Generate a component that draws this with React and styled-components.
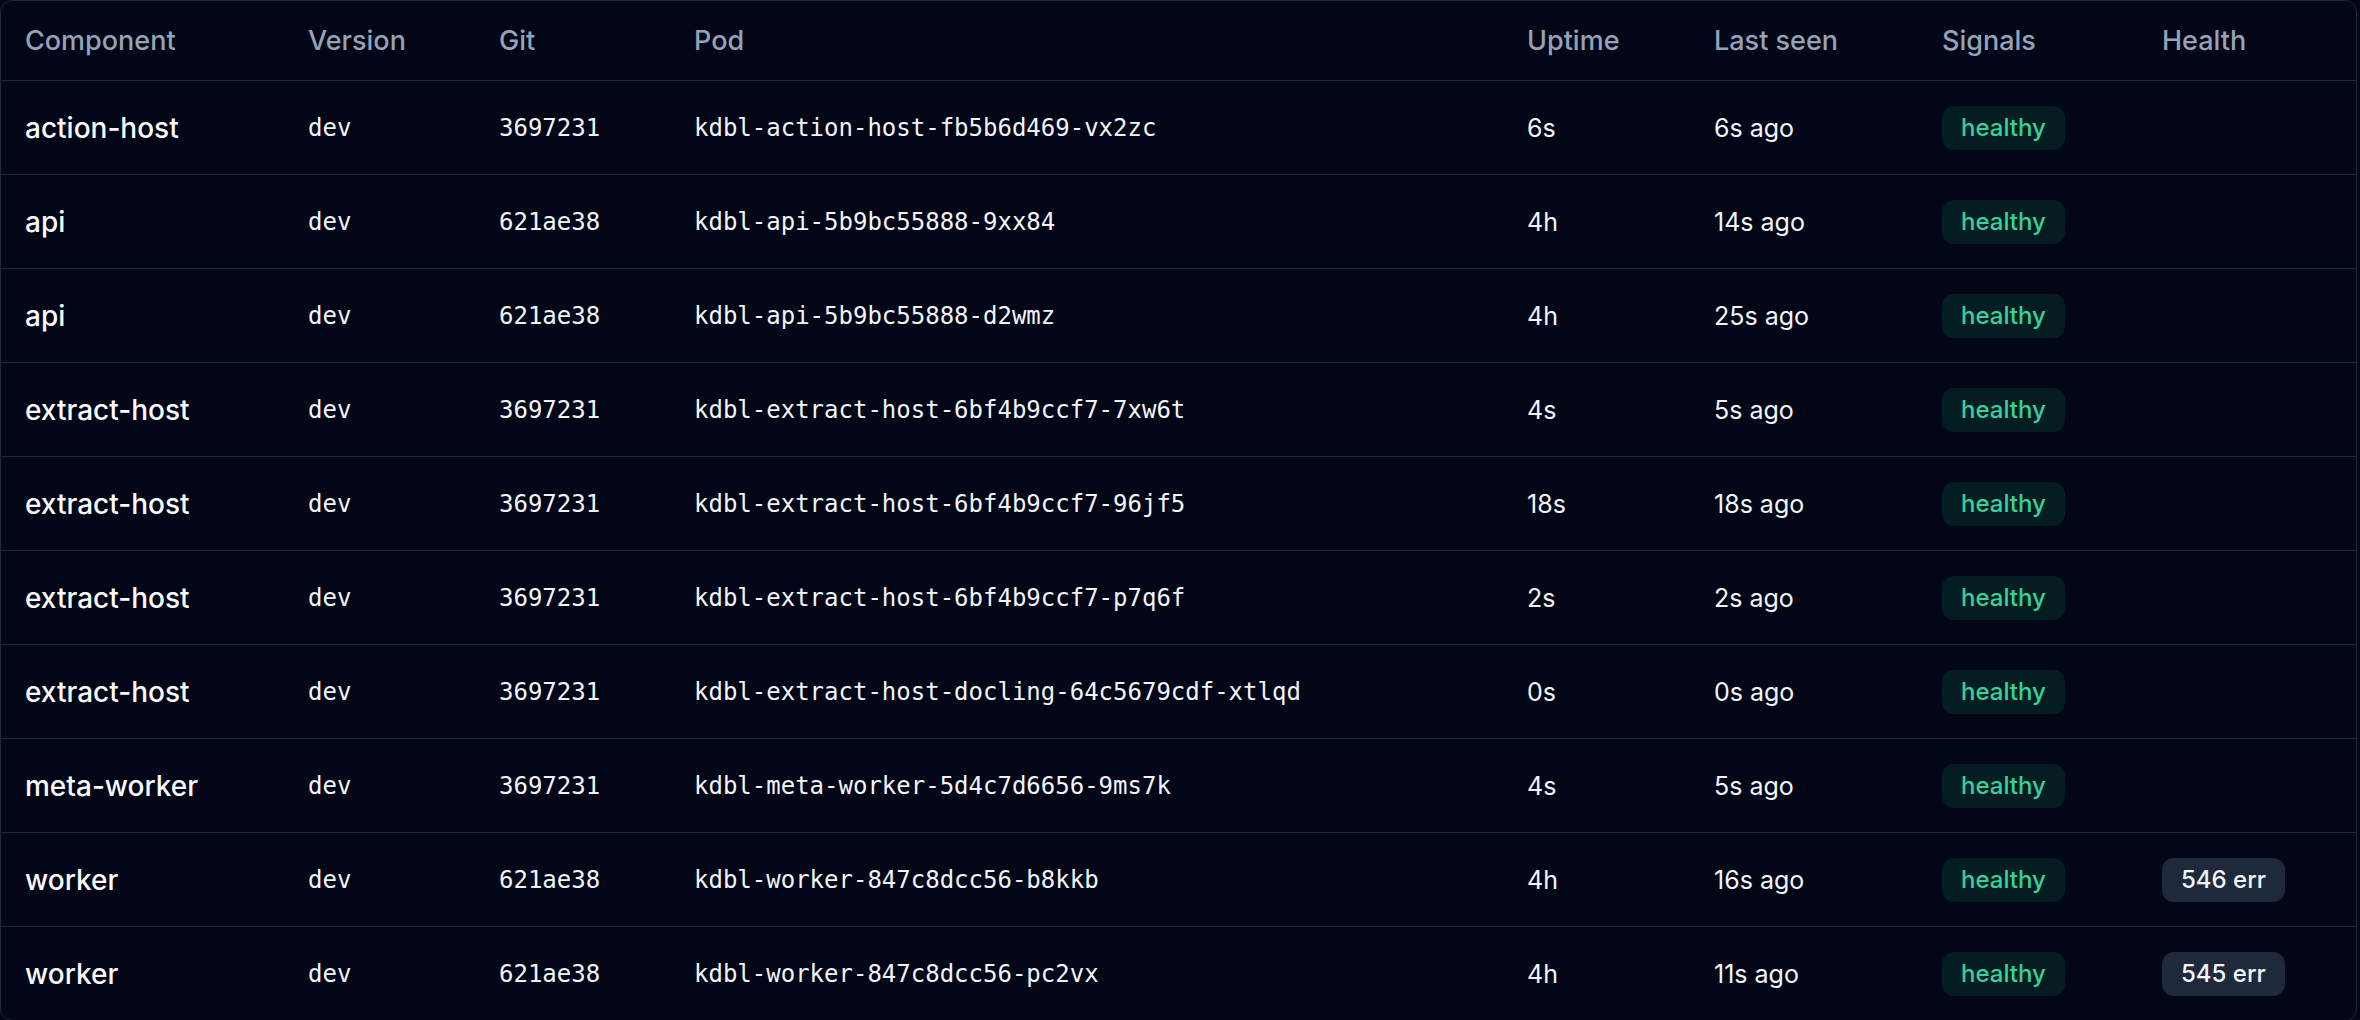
import React from 'react';
import styled, { createGlobalStyle } from 'styled-components';

const GlobalStyle = createGlobalStyle`
  html, body {
    margin: 0;
    padding: 0;
    background: #020617;
  }
  body {
    font-family: Inter, "Noto Sans", sans-serif;
    -webkit-font-smoothing: antialiased;
  }
`;

const columns = '283px 191px 195px 833px 187px 228px 220px 220px';

const Card = styled.div`
  width: 2357px;
  box-sizing: border-box;
  border: 1px solid #1e293b;
  border-radius: 12px;
  background: #020617;
  overflow: hidden;
`;

const Row = styled.div`
  display: grid;
  grid-template-columns: ${columns};
  align-items: center;
  height: ${(p) => (p.$header ? '79px' : '93px')};
  border-top: ${(p) => (p.$first ? 'none' : '1px solid #1e293b')};
`;

const HeadCell = styled.div`
  padding-left: 24px;
  font-size: 27px;
  font-weight: 500;
  color: #94a3b8;
  white-space: nowrap;
`;

const Cell = styled.div`
  padding-left: 24px;
  white-space: nowrap;
  color: #f1f5f9;
  font-size: ${(p) => (p.$mono ? '24px' : '25px')};
  font-family: ${(p) =>
    p.$mono ? '"DejaVu Sans Mono", "Liberation Mono", monospace' : 'inherit'};
`;

const Name = styled(Cell)`
  font-size: 28px;
  font-weight: 500;
  color: #f8fafc;
`;

const Badge = styled.span`
  display: inline-flex;
  align-items: center;
  height: 44px;
  padding: 0 19px;
  border-radius: 12px;
  font-size: 24px;
  font-weight: 500;
  background: ${(p) => (p.$tone === 'ok' ? '#041d23' : '#1e293b')};
  color: ${(p) => (p.$tone === 'ok' ? '#34d399' : '#f1f5f9')};
`;

const headers = ['Component', 'Version', 'Git', 'Pod', 'Uptime', 'Last seen', 'Signals', 'Health'];

const pods = [
  { name: 'action-host', git: '3697231', pod: 'kdbl-action-host-fb5b6d469-vx2zc', uptime: '6s', seen: '6s ago' },
  { name: 'api', git: '621ae38', pod: 'kdbl-api-5b9bc55888-9xx84', uptime: '4h', seen: '14s ago' },
  { name: 'api', git: '621ae38', pod: 'kdbl-api-5b9bc55888-d2wmz', uptime: '4h', seen: '25s ago' },
  { name: 'extract-host', git: '3697231', pod: 'kdbl-extract-host-6bf4b9ccf7-7xw6t', uptime: '4s', seen: '5s ago' },
  { name: 'extract-host', git: '3697231', pod: 'kdbl-extract-host-6bf4b9ccf7-96jf5', uptime: '18s', seen: '18s ago' },
  { name: 'extract-host', git: '3697231', pod: 'kdbl-extract-host-6bf4b9ccf7-p7q6f', uptime: '2s', seen: '2s ago' },
  { name: 'extract-host', git: '3697231', pod: 'kdbl-extract-host-docling-64c5679cdf-xtlqd', uptime: '0s', seen: '0s ago' },
  { name: 'meta-worker', git: '3697231', pod: 'kdbl-meta-worker-5d4c7d6656-9ms7k', uptime: '4s', seen: '5s ago' },
  { name: 'worker', git: '621ae38', pod: 'kdbl-worker-847c8dcc56-b8kkb', uptime: '4h', seen: '16s ago', errors: 546 },
  { name: 'worker', git: '621ae38', pod: 'kdbl-worker-847c8dcc56-pc2vx', uptime: '4h', seen: '11s ago', errors: 545 },
];

function App() {
  return (
    <>
      <GlobalStyle />
      <Card>
        <Row $header $first>
          {headers.map((h) => (
            <HeadCell key={h}>{h}</HeadCell>
          ))}
        </Row>
        {pods.map((p) => (
          <Row key={p.pod}>
            <Name>{p.name}</Name>
            <Cell $mono>dev</Cell>
            <Cell $mono>{p.git}</Cell>
            <Cell $mono>{p.pod}</Cell>
            <Cell>{p.uptime}</Cell>
            <Cell>{p.seen}</Cell>
            <Cell>
              <Badge $tone="ok">healthy</Badge>
            </Cell>
            <Cell>{p.errors && <Badge>{p.errors} err</Badge>}</Cell>
          </Row>
        ))}
      </Card>
    </>
  );
}

export default App;
